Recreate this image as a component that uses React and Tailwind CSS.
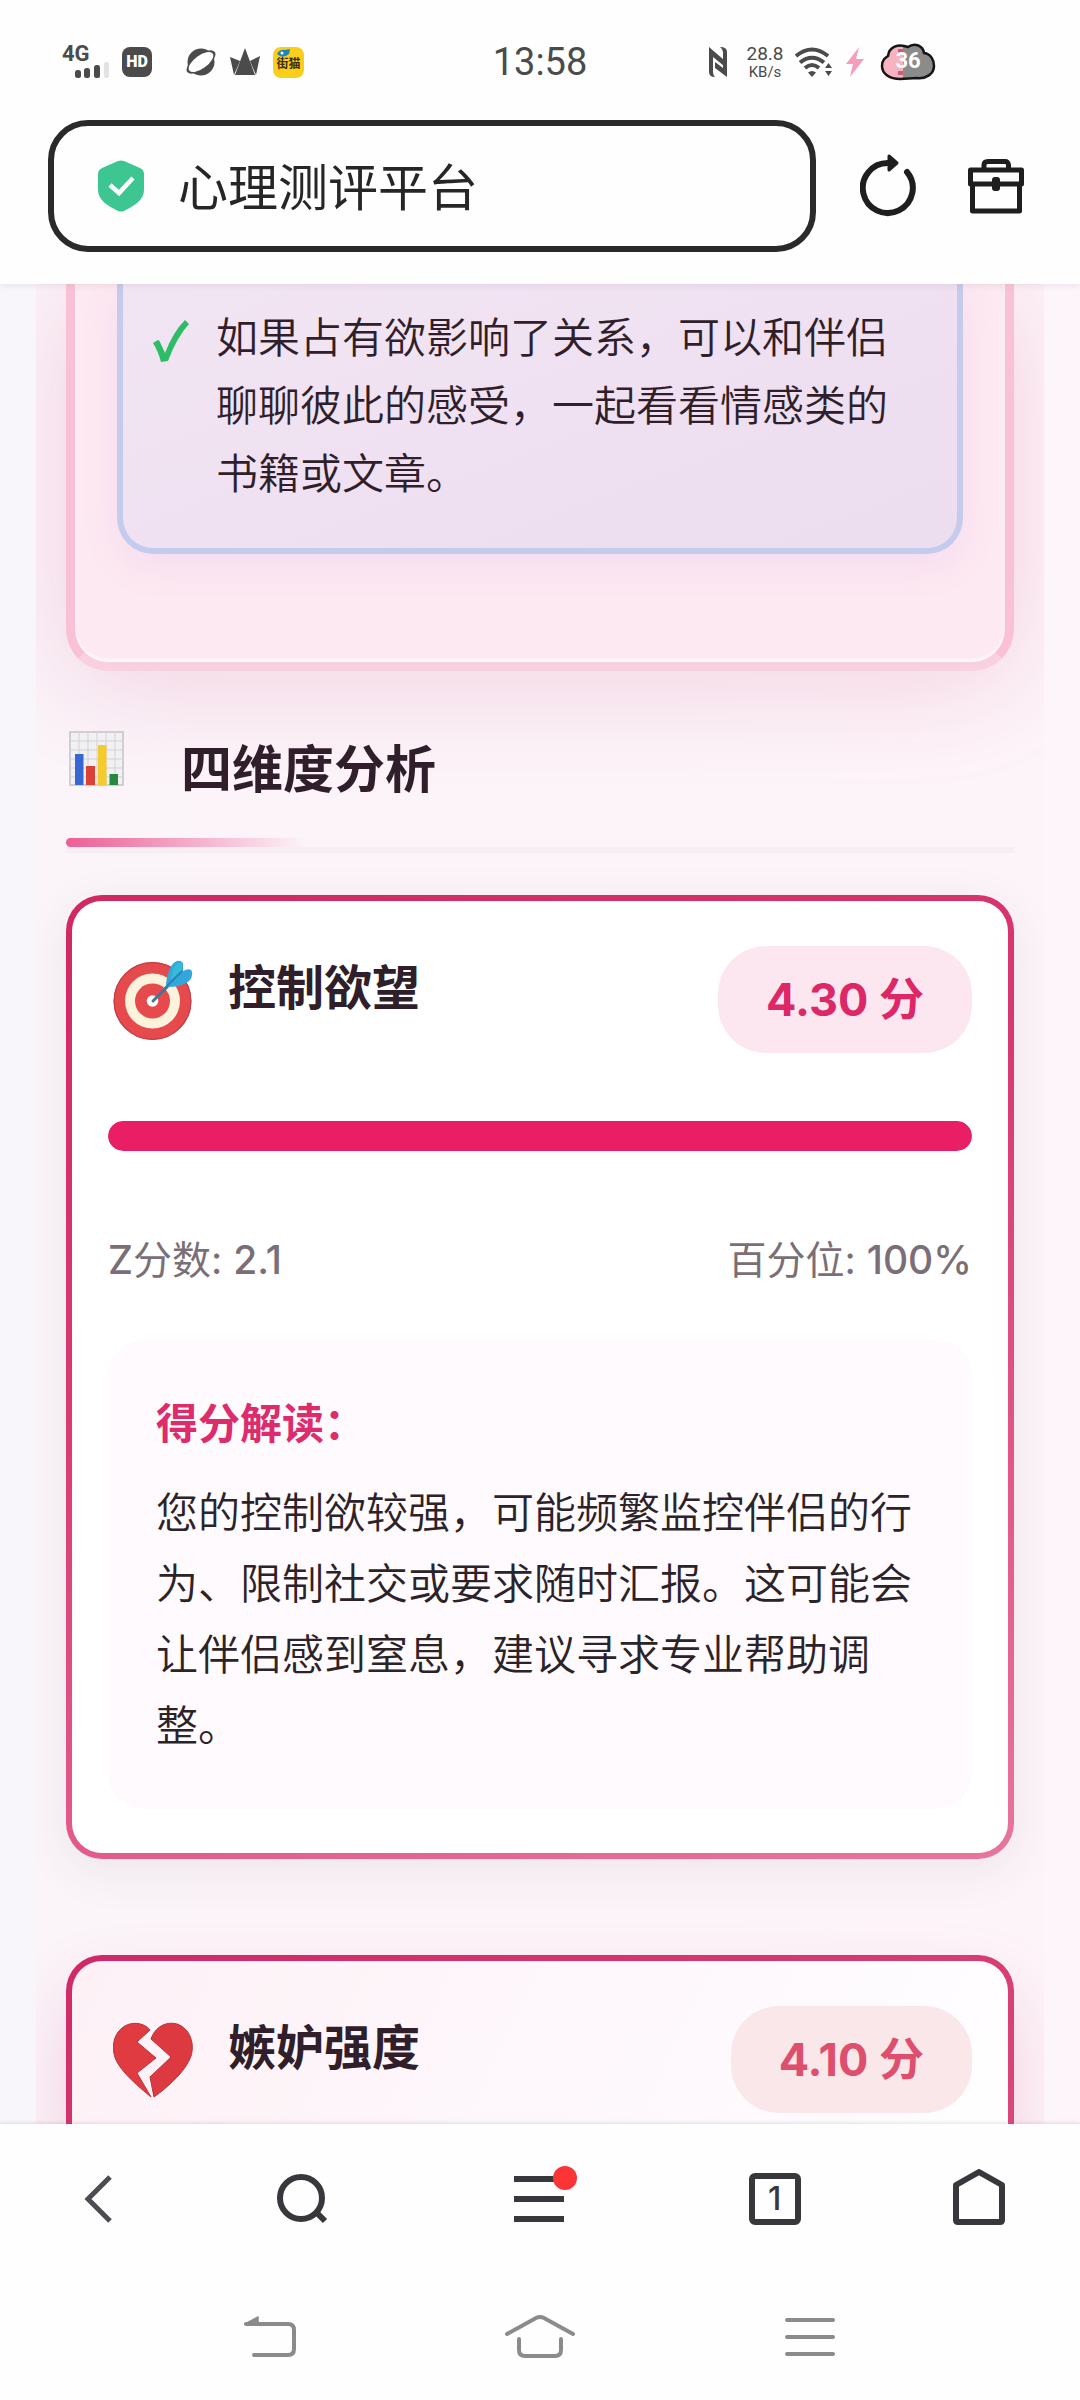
const DIMENSIONS = [
  {
    id: 'control',
    name: '控制欲望',
    score: '4.30',
    z: '2.1',
    percentile: 100,
    note: '您的控制欲较强，可能频繁监控伴侣的行为、限制社交或要求随时汇报。这可能会让伴侣感到窒息，建议寻求专业帮助调整。',
    icon: TargetIcon,
    card: '[background:linear-gradient(#fff,#fff)_padding-box,linear-gradient(160deg,#cf2862,#d93a72_40%,#e9749f)_border-box] shadow-[0_12px_48px_rgba(60,60,60,0.08)]',
    pill: 'bg-[#fce6f0] text-[#dd2868]',
    bar: 'bg-[#ea1e64]',
  },
  {
    id: 'jealousy',
    name: '嫉妒强度',
    score: '4.10',
    icon: BrokenHeartIcon,
    card: '[background:linear-gradient(115deg,#fdf1f6,#fefafe_75%,#fff)_padding-box,linear-gradient(160deg,#d02867,#db4a7b)_border-box] shadow-[0_36px_72px_rgba(194,24,91,0.16)]',
    pill: 'bg-[#fae7ea] text-[#dd4f6d]',
  },
]

function TargetIcon() {
  return (
    <svg viewBox="0 0 80 80" className="h-20 w-20" aria-hidden="true">
      <circle cx="39.500" cy="41" r="39" fill="#e64a4c" />
      <circle cx="39.500" cy="41" r="38.300" fill="none" stroke="#bf4048" strokeWidth="1.200" />
      <circle cx="39.500" cy="41" r="27.500" fill="#fdf3dc" />
      <circle cx="39.500" cy="41" r="17.500" fill="#e64a4c" />
      <circle cx="39.500" cy="41" r="5.800" fill="#fff" />
      <path d="M40 41 56 25" stroke="#41769c" strokeWidth="3" strokeLinecap="round" />
      <path d="M53 27 C53 17 57 5 62 2 Q67 -1 70 3 L70 11 Q78 7 79 12 Q80 17 76 21 C70 26 62 27 53 27Z" fill="#33a6da" />
      <path d="M60 9 Q64 1 69 3 L69 11 58 20Z" fill="#35bcd8" />
      <path d="M51 29 69 11" stroke="#2a80b4" strokeWidth="1.800" />
    </svg>
  )
}

function BrokenHeartIcon() {
  return (
    <svg viewBox="0 0 80 76" className="h-[76px] w-20" aria-hidden="true">
      <path d="M37 8 C31 0 17 -1 9 6 C0 13 -2 27 3 38 C9 51 26 65 38 75 L24 51 L43 36 L24 20Z" fill="#df3b40" stroke="#b9343a" strokeWidth="1" />
      <path d="M38 17 C42 5 53 -1 64 2 C77 6 82 22 78 34 C73 49 55 65 41 75 L37 55 L58 35Z" fill="#dc3a40" stroke="#b9343a" strokeWidth="1" />
    </svg>
  )
}

function ChartIcon() {
  return (
    <svg viewBox="0 0 60 56" className="h-14 w-[60px] shrink-0" aria-hidden="true">
      <rect x="4" y="1" width="53" height="53" fill="#f1f0f3" stroke="#c4c2c8" strokeWidth="1.500" />
      <path d="M13 1v53M22 1v53M31 1v53M40 1v53M49 1v53M4 10h53M4 19h53M4 28h53M4 37h53M4 46h53" stroke="#d3d1d7" />
      <rect x="9" y="23" width="8.500" height="31" fill="#3867d4" />
      <rect x="20" y="35" width="9" height="19" fill="#dd4034" />
      <rect x="32" y="14" width="8.500" height="40" fill="#f4cb2c" />
      <rect x="43.500" y="43" width="8.500" height="11" fill="#27893f" />
    </svg>
  )
}

function StatusBar() {
  return (
    <div className="grid h-[120px] grid-cols-[1fr_auto_1fr] items-center pt-1 text-[#4b4b4b]">
      <div className="flex items-center pl-[62px]">
        <div className="flex w-[52px] flex-col items-start">
          <span className="font-[Roboto] text-[22px] font-bold leading-4">4G</span>
          <svg viewBox="0 0 38 16" className="ml-3 h-4 w-[38px]" aria-hidden="true">
            <rect x="1" y="8" width="6" height="8" rx="2.500" fill="#4b4b4b" />
            <rect x="10" y="6" width="6" height="10" rx="2.500" fill="#4b4b4b" />
            <rect x="20" y="3" width="6" height="13" rx="2.500" fill="#4b4b4b" />
            <rect x="30" y="0" width="5" height="16" rx="2" fill="#e2e2e2" />
          </svg>
        </div>
        <span className="ml-2 flex h-[30px] w-[30px] items-center justify-center rounded-lg bg-[#4b4b4b] font-[Roboto] text-base font-black text-white">HD</span>
        <svg viewBox="0 0 32 28" className="ml-[33px] h-7 w-8" aria-hidden="true">
          <circle cx="16" cy="14" r="13.500" fill="#4b4b4b" />
          <ellipse cx="16" cy="14" rx="17" ry="7.500" transform="rotate(-36 16 14)" fill="#4b4b4b" />
          <ellipse cx="16" cy="14" rx="14.500" ry="6.500" transform="rotate(-36 16 14)" fill="#fefefe" />
        </svg>
        <svg viewBox="0 0 32 28" className="ml-3 h-7 w-8" fill="#4b4b4b" aria-hidden="true">
          <path d="M16 0 26 27H6ZM1 9 11 13 5 27ZM31 8 21 13 27 27Z" />
        </svg>
        <span className="relative ml-3 flex h-[31px] w-[31px] items-end justify-center rounded-lg bg-[#fbce1b] pb-1.5 text-xs font-bold leading-4 text-[#3f2c12]">
          街猫
          <svg viewBox="0 0 14 8" className="absolute left-1 top-0.5 h-2 w-3.5" aria-hidden="true">
            <path d="M0 5 Q3 0 8 1 L13 0 12 5 Q7 9 3 7Z" fill="#1a87b8" />
            <circle cx="5" cy="4" r="1.500" fill="#fff" />
          </svg>
        </span>
      </div>
      <time className="font-[Roboto] text-[38px] leading-[46px]">13:58</time>
      <div className="flex items-center justify-end pr-36">
        <svg viewBox="0 0 20 30" className="h-[30px] w-5" fill="#4b4b4b" aria-hidden="true">
          <path d="M1 0 L16 13V19L5 10V25Q5 28 7 30Q1 30 1 25Z" />
          <path d="M19 30 L7 21V15L15 21V5Q15 2 12 0Q19 0 19 5Z" />
        </svg>
        <div className="ml-4 w-[42px] text-center font-[Roboto]">
          <div className="text-[19px] leading-5">28.8</div>
          <div className="text-[15px] leading-4">KB/s</div>
        </div>
        <svg viewBox="0 0 40 30" className="ml-2 h-[30px] w-10" fill="none" stroke="#4b4b4b" strokeWidth="4" aria-hidden="true">
          <path d="M2 9 Q18 -4 34 9M6 15.500 Q18 6 30 15.500M11 21 Q18 15 25 21" />
          <path d="M14 25.500 Q18 22.500 22 25.500 L18 30Z" fill="#4b4b4b" stroke="none" />
          <path d="M31 21 34.500 16 38 21ZM31 24 34.500 29 38 24Z" fill="#4b4b4b" stroke="none" />
        </svg>
        <svg viewBox="0 0 18 30" className="ml-3 h-[30px] w-[18px]" aria-hidden="true">
          <path d="M13 0 0 17H7L4 30 18 12H10Z" fill="#f59db9" />
        </svg>
        <svg viewBox="0 0 56 40" className="ml-4 h-10 w-14" aria-hidden="true">
          <defs>
            <clipPath id="battery">
              <path d="M20 37 C10 37 2 32 2 24 C2 18 5 16 8 14 C9 5 18 1 28 5 C35 0 43 4 44 11 C51 12 54 18 54 24 C54 32 46 37 37 36Z" />
            </clipPath>
          </defs>
          <g clipPath="url(#battery)">
            <rect width="56" height="40" fill="#8b8b8b" />
            <rect width="23" height="40" fill="#f8b3c1" />
            <path d="M18 7h5v4h-5zM18 29h5v4h-5z" fill="#c4627c" />
          </g>
          <path d="M20 37 C10 37 2 32 2 24 C2 18 5 16 8 14 C9 5 18 1 28 5 C35 0 43 4 44 11 C51 12 54 18 54 24 C54 32 46 37 37 36Z" fill="none" stroke="#151515" strokeWidth="2.500" />
          <text x="28" y="26" textAnchor="middle" fill="#fff" fontSize="22" fontWeight="700" fontFamily="Roboto, sans-serif">36</text>
        </svg>
      </div>
    </div>
  )
}

function AddressBar() {
  return (
    <div className="flex items-center pb-8 pl-12 pr-14">
      <div className="flex h-[132px] min-w-0 flex-1 items-center rounded-[40px] border-6 border-[#2a2a2a] pl-11">
        <svg viewBox="0 0 46 52" className="h-[52px] w-[46px] shrink-0" aria-hidden="true">
          <path d="M20 1 Q23 0 26 1 L42 8 Q46 10 46 14 V30 C46 40 36 46 26 51 Q23 52 20 51 C10 46 0 40 0 30 V14 Q0 10 4 8Z" fill="#3dc592" />
          <path d="M12 25 21 33 35 18" fill="none" stroke="#fff" strokeWidth="4.500" />
        </svg>
        <input
          aria-label="网址"
          defaultValue="心理测评平台"
          className="ml-[34px] min-w-0 flex-1 bg-transparent pt-1 text-[50px] leading-[72px] text-[#262626] outline-none"
        />
      </div>
      <button type="button" aria-label="刷新" className="ml-11 shrink-0">
        <svg viewBox="0 0 56 64" className="h-16 w-14" fill="none" stroke="#1e1e1e" strokeWidth="6" strokeLinecap="round" aria-hidden="true">
          <path d="M47 18 A25 25 0 1 1 28 9" />
          <path d="M29 2 37 9 29 16Z" fill="#1e1e1e" strokeWidth="3" strokeLinejoin="round" />
        </svg>
      </button>
      <button type="button" aria-label="工具箱" className="ml-[52px] shrink-0">
        <svg viewBox="0 0 56 56" className="h-14 w-14" fill="none" stroke="#1e1e1e" strokeWidth="5" strokeLinejoin="round" aria-hidden="true">
          <path d="M2.500 12H53.500V26H2.500ZM4.500 26H51.500V53H4.500ZM16 12V7Q16 3.500 20 3.500H37Q40 3.500 40.500 7V12" />
          <rect x="24" y="19" width="8" height="14" rx="3" fill="#1e1e1e" stroke="none" />
        </svg>
      </button>
    </div>
  )
}

function AdviceCard() {
  return (
    <section className="rounded-b-[42px] border-9 border-t-0 border-[#fac1d6] border-b-[#f8d0e0] bg-[#fde9f1] px-[42px] pb-[108px] shadow-[inset_0_-3px_3px_rgba(255,255,255,0.7),0_12px_110px_rgba(194,24,91,0.16)]">
      <ul className="rounded-b-[36px] border-6 border-t-0 border-[#c5cbec] bg-linear-160 from-[#f2e5f3] to-[#ecddef] pb-10 pl-[30px] pr-9 pt-5 shadow-[0_12px_36px_rgba(200,120,235,0.12)]">
        <li className="flex items-start text-[42px] leading-[68px] text-[#301f2b]">
          <svg viewBox="0 0 36 42" className="mt-4 h-[42px] w-9 shrink-0" fill="#2dbd66" aria-hidden="true">
            <path d="M0 23 5 20 Q6 20 7 22 L12 33 Q20 12 32 0 L36 4 Q24 17 15 41 L8 42 Q5 31 0 23Z" />
          </svg>
          <span className="ml-[27px] flex-1 font-[350]">如果占有欲影响了关系，可以和伴侣聊聊彼此的感受，一起看看情感类的书籍或文章。</span>
        </li>
      </ul>
    </section>
  )
}

function DimensionCard({ item }) {
  const Icon = item.icon
  return (
    <article className={`rounded-[36px] border-6 border-transparent px-9 pb-11 pt-[45px] ${item.card}`}>
      <header className="flex items-start justify-between">
        <div className="flex">
          <span className="ml-[5px] flex h-[107px] items-center"><Icon /></span>
          <h3 className="ml-[35px] text-5xl font-bold leading-[84px] text-[#301f2b]">{item.name}</h3>
        </div>
        <span className={`rounded-[48px] px-12 py-5 text-[45px] font-bold leading-[67px] ${item.pill}`}>{item.score} 分</span>
      </header>
      {item.note && (
        <>
          <div role="progressbar" aria-label={item.name} aria-valuenow={item.percentile} className="mt-[68px] h-[30px] overflow-hidden rounded-full bg-[#f6e8ef]">
            <div className={`h-full rounded-full ${item.bar}`} style={{ width: `${item.percentile}%` }} />
          </div>
          <div className="mt-[78px] flex justify-between text-[39px] leading-[62px] text-[#7b6f77]">
            <span><span className="font-medium">Z</span>分数: <span className="font-medium">{item.z}</span></span>
            <span>百分位: <span className="font-medium">{item.percentile}%</span></span>
          </div>
          <div className="mt-[49px] rounded-[36px] bg-[#fefafe] p-12 text-[42px] leading-[71px]">
            <h4 className="mb-[18px] font-bold text-[#dc2c6b]">得分解读：</h4>
            <p className="font-[350] text-[#2b2328]">{item.note}</p>
          </div>
        </>
      )}
    </article>
  )
}

function BrowserNav() {
  return (
    <nav className="flex h-[150px] items-center justify-between pl-[72px] pr-[75px] text-[#38373b]">
      <button type="button" aria-label="后退" className="flex w-[52px] justify-center">
        <svg viewBox="0 0 28 48" className="h-12 w-7" fill="none" stroke="#4d4c50" strokeWidth="5" aria-hidden="true"><path d="M26 2 4 24 26 46" /></svg>
      </button>
      <button type="button" aria-label="搜索" className="w-[52px]">
        <svg viewBox="0 0 52 52" className="h-[52px] w-[52px]" fill="none" stroke="currentColor" strokeWidth="6" aria-hidden="true">
          <circle cx="25" cy="25" r="21" />
          <path d="M40 39 49 48" />
        </svg>
      </button>
      <button type="button" aria-label="菜单" className="relative flex w-[116px] justify-center">
        <svg viewBox="0 0 50 46" className="h-[46px] w-[50px]" stroke="currentColor" strokeWidth="6" aria-hidden="true"><path d="M0 3H50M0 23H50M0 43H50" /></svg>
        <span className="absolute -top-2.5 right-5 h-6 w-6 rounded-full bg-[#fb3435]" />
      </button>
      <button type="button" aria-label="标签页" className="flex h-[52px] w-[52px] items-center justify-center rounded-md border-6 border-[#38373b] text-[32px] font-medium leading-10">1</button>
      <button type="button" aria-label="主页" className="w-[52px]">
        <svg viewBox="0 0 52 60" className="h-[60px] w-[52px]" fill="none" stroke="currentColor" strokeWidth="6" strokeLinejoin="round" aria-hidden="true">
          <path d="M26 3 49 16V51Q49 53 47 53H5Q3 53 3 51V16Z" />
        </svg>
      </button>
    </nav>
  )
}

function SystemNav() {
  return (
    <nav className="flex h-[126px] items-center justify-between px-[235px]">
      <button type="button" aria-label="返回" className="flex w-[70px] justify-center">
        <svg viewBox="0 0 52 42" className="h-[42px] w-[52px]" fill="none" stroke="#8b8b8b" strokeWidth="4" strokeLinecap="round" strokeLinejoin="round" aria-hidden="true">
          <path d="M2 8H44Q50 8 50 14V33Q50 39 44 39H10" />
          <path d="M1 8 14 1V8Z" fill="#8b8b8b" strokeWidth="1.500" />
        </svg>
      </button>
      <button type="button" aria-label="桌面" className="w-[70px]">
        <svg viewBox="0 0 70 46" className="h-[46px] w-[70px]" fill="none" stroke="#8b8b8b" strokeWidth="4" strokeLinecap="round" aria-hidden="true">
          <path d="M2 20 31 4Q35 2 39 4L68 20M14 25V36Q14 42 20 42H50Q56 42 56 36V25" />
        </svg>
      </button>
      <button type="button" aria-label="最近任务" className="flex w-[70px] justify-center">
        <svg viewBox="0 0 50 38" className="h-[38px] w-[50px]" stroke="#8b8b8b" strokeWidth="4" strokeLinecap="round" aria-hidden="true"><path d="M2 2H48M2 19H48M2 36H48" /></svg>
      </button>
    </nav>
  )
}

export default function App() {
  return (
    <div lang="zh-CN" className="flex h-screen flex-col bg-[#fefefe] font-['Inter','Noto_Sans_CJK_SC',sans-serif]">
      <header className="z-10 shrink-0 bg-[#fefefe] shadow-[0_2px_6px_rgba(120,110,130,0.12)]">
        <StatusBar />
        <AddressBar />
      </header>

      <main className="min-h-0 flex-1 overflow-hidden bg-linear-to-r from-[#f8f6fb] to-[#fdf5fa] px-9">
        <div className="overflow-hidden bg-[#fdf4f9]/60 px-[30px] pb-24">
          <AdviceCard />
          <h2 className="mt-[60px] flex items-start gap-[55px] text-[51px] font-bold leading-[78px] text-[#301f2b]">
            <ChartIcon />
            四维度分析
          </h2>
          <div className="mb-[42px] mt-[29px] border-b-6 border-[#f7eef4]">
            <div className="h-[9px] w-60 rounded-l-full bg-linear-to-r from-[#ec5f95] to-transparent" />
          </div>
          <div className="space-y-24">
            {DIMENSIONS.map((item) => <DimensionCard key={item.id} item={item} />)}
          </div>
        </div>
      </main>

      <footer className="z-10 shrink-0 bg-[#fefefe] shadow-[0_-1px_4px_rgba(100,100,120,0.2)]">
        <BrowserNav />
        <SystemNav />
      </footer>
    </div>
  )
}
